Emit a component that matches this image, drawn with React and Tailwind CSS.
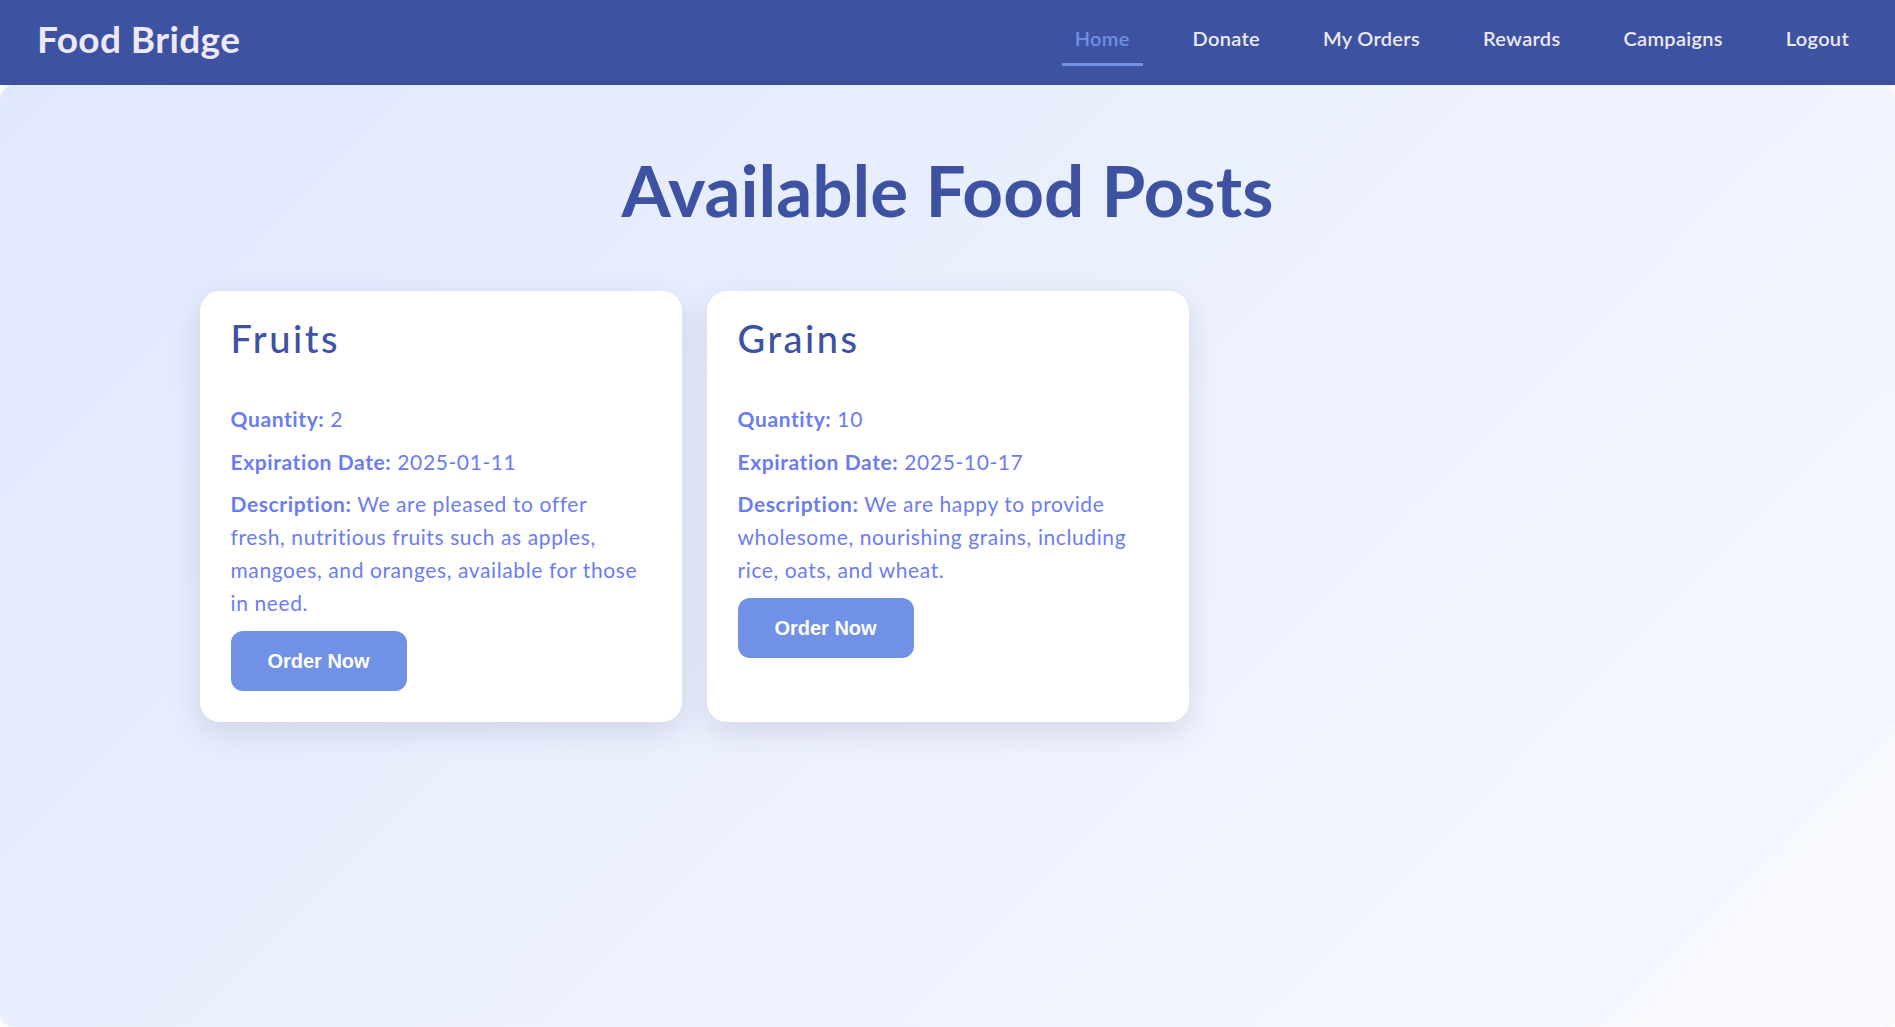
import React from "react";

const posts = [
  {
    title: "Fruits",
    quantity: "2",
    date: "2025-01-11",
    desc: [
      "We are pleased to offer",
      "fresh, nutritious fruits such as apples,",
      "mangoes, and oranges, available for those",
      "in need.",
    ],
  },
  {
    title: "Grains",
    quantity: "10",
    date: "2025-10-17",
    desc: [
      "We are happy to provide",
      "wholesome, nourishing grains, including",
      "rice, oats, and wheat.",
    ],
  },
];

const links = ["Home", "Donate", "My Orders", "Rewards", "Campaigns", "Logout"];

function Card({ p }) {
  return (
    <div className="bg-white rounded-[20px] shadow-[0_10px_30px_rgba(40,50,90,0.14)] pt-[24px] pb-[31px] px-[31px] flex flex-col items-start">
      <h3 className="text-[38px] leading-[46px] font-medium tracking-[2.5px] text-[#3d52a0]">{p.title}</h3>
      <p className="mt-[41px] text-[21px] leading-[33px] tracking-[0.6px] text-[#6b7cf3]">
        <b className="font-bold">Quantity:</b> {p.quantity}
      </p>
      <p className="mt-[10px] text-[21px] leading-[33px] tracking-[0.6px] text-[#6b7cf3]">
        <b className="font-bold">Expiration Date:</b> {p.date}
      </p>
      <p className="mt-[9px] text-[21px] leading-[33px] tracking-[0.6px] text-[#6b7cf3] whitespace-nowrap">
        <b className="font-bold">Description:</b>{" "}
        {p.desc.map((line, i) => (
          <React.Fragment key={i}>
            {i > 0 && <br />}
            {line}
          </React.Fragment>
        ))}
      </p>
      <button className="mt-[12px] w-[176px] h-[60px] rounded-[12px] bg-[#7091e6] text-white text-[20px] font-bold font-['Liberation_Sans',Arial,sans-serif]">
        Order Now
      </button>
    </div>
  );
}

export default function App() {
  return (
    <div className="min-h-[1027px] bg-white font-['Lato',sans-serif]">
      <header className="h-[85px] bg-[#3d52a0] flex items-start justify-between pl-[37px] pr-[33px]">
        <div className="mt-[20px] text-[37px] font-bold tracking-[0.4px] text-[#ede8f5] leading-[37px]">Food Bridge</div>
        <nav className="flex items-start gap-[37px] pt-[28px]">
          {links.map((l) => (
            <a
              key={l}
              className={
                "relative px-[13px] text-[20px] font-semibold tracking-[0.3px] leading-[20px] " +
                (l === "Home" ? "text-[#7091e6]" : "text-[#ede8f5]")
              }
            >
              {l}
              {l === "Home" && (
                <span className="absolute left-0 right-0 top-[35px] h-[3px] bg-[#7091e6]" />
              )}
            </a>
          ))}
        </nav>
      </header>
      <main className="min-h-[942px] rounded-[15px] shadow-[0_0_12px_rgba(0,0,0,0.08)] bg-[linear-gradient(135deg,#e0e8fd_0%,#f9faff_100%)] pt-[63px]">
        <h1 className="text-center text-[71px] leading-[84px] font-bold text-[#3d52a0]">
          Available Food Posts
        </h1>
        <div className="mt-[59px] mx-auto w-[1496px] grid grid-cols-3 gap-[25px] items-stretch">
          {posts.map((p) => (
            <Card key={p.title} p={p} />
          ))}
        </div>
      </main>
    </div>
  );
}
